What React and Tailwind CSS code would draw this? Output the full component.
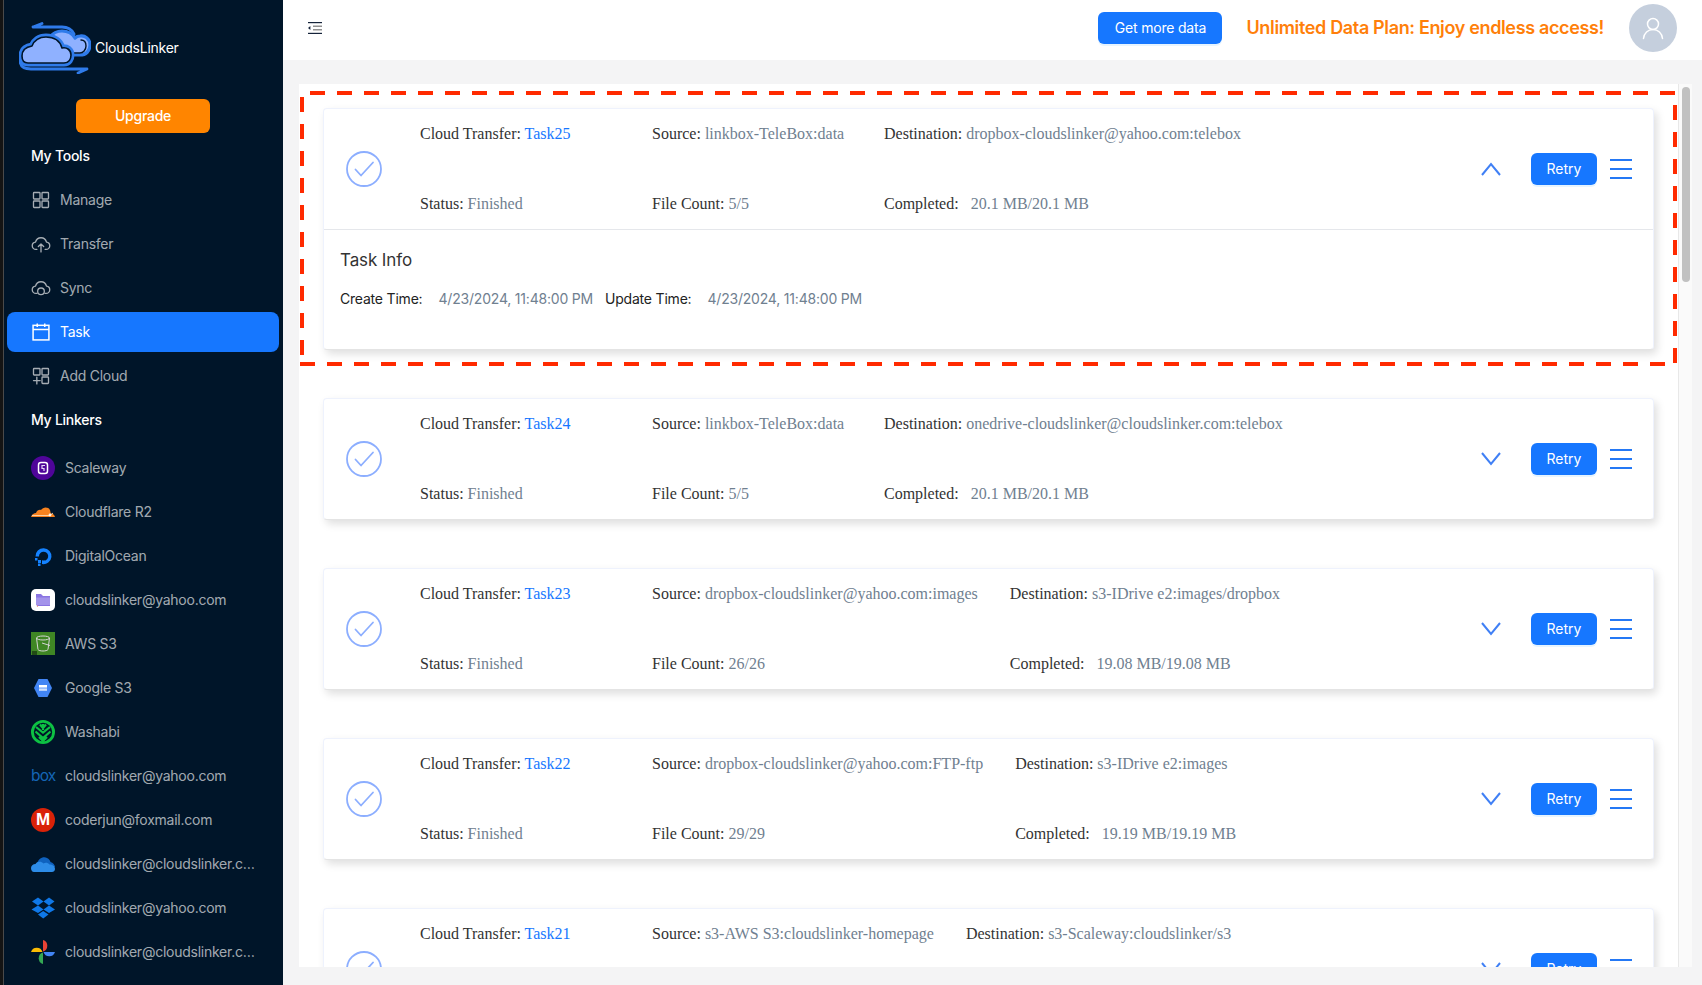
import React from "react";

const sans = "font-['Inter','Noto_Sans',sans-serif]";
const serif = "font-['Liberation_Serif','Times_New_Roman',serif]";

const S = (p) => <svg viewBox="0 0 24 24" fill="none" {...p} />;

const Logo = () => (
  <svg viewBox="19 22 72 52" className="w-[72px] h-[52px] shrink-0" fill="none" strokeLinecap="round" strokeLinejoin="round">
    <path d="M33 27 H62 C68 27 72 30 74 34 M33 27 L42 23.5 M20 60 C20 66 24 69 31 69 H87 L78 73" stroke="#2f7bea" strokeWidth="2.8" />
    <path d="M54 55 H80 C86 55 90 51 90 45 C90 39 85 35 80 36 C78 36 76 37 75 38 C72 33 67 31 62 31 C57 31 53 33 50 37 Z" fill="#8fb1ff" stroke="#2f7bea" strokeWidth="3.2" />
    <path d="M56 53 H80 C83 53 86 50 86 46 C86 42 84 40 81 40" stroke="#001529" strokeWidth="1.4" />
    <path d="M28 63 H64 C69 63 71 59 71 55 C71 50 67 47 62 48 C60 41 54 37 46 37 C39 37 34 41 32 46 C26 47 22 50 22 56 C22 60 24 63 28 63 Z" stroke="#2f7bea" strokeWidth="7" />
    <path d="M28 63 H64 C69 63 71 59 71 55 C71 50 67 47 62 48 C60 41 54 37 46 37 C39 37 34 41 32 46 C26 47 22 50 22 56 C22 60 24 63 28 63 Z" fill="#8fb1ff" stroke="#001529" strokeWidth="1.6" />
  </svg>
);

const iconBase = { className: "w-[20px] h-[20px] shrink-0", stroke: "currentColor", strokeWidth: 1.6, strokeLinecap: "round", strokeLinejoin: "round" };

const IconManage = () => (
  <S {...iconBase}>
    <rect x="3" y="3" width="7.8" height="7.8" rx="0.8" />
    <rect x="13.2" y="3" width="7.8" height="7.8" rx="0.8" />
    <rect x="3" y="13.2" width="7.8" height="7.8" rx="0.8" />
    <rect x="13.2" y="13.2" width="7.8" height="7.8" rx="0.8" />
  </S>
);
const IconTransfer = () => (
  <S {...iconBase}>
    <path d="M7 18.5 H6 C3.5 18.5 1.5 16.5 1.5 14 C1.5 11.7 3.2 10 5.4 9.7 C6.2 6.7 8.9 4.5 12 4.5 C15.1 4.5 17.8 6.7 18.6 9.7 C20.8 10 22.5 11.7 22.5 14 C22.5 16.5 20.5 18.5 18 18.5 H17" />
    <path d="M12 21.5 V12 M8.8 15 L12 12 L15.2 15" />
  </S>
);
const IconSync = () => (
  <S {...iconBase}>
    <path d="M7 18.5 H6 C3.5 18.5 1.5 16.5 1.5 14 C1.5 11.7 3.2 10 5.4 9.7 C6.2 6.7 8.9 4.5 12 4.5 C15.1 4.5 17.8 6.7 18.6 9.7 C20.8 10 22.5 11.7 22.5 14 C22.5 16.5 20.5 18.5 18 18.5 H17" />
    <circle cx="12" cy="16" r="4" />
  </S>
);
const IconTask = () => (
  <S {...iconBase} strokeWidth="1.8" strokeLinecap="butt" strokeLinejoin="miter">
    <rect x="2.5" y="4" width="19" height="17.5" />
    <path d="M2.5 9 H21.5 M7.5 1.8 V6 M16.5 1.8 V6" />
  </S>
);
const IconAdd = () => (
  <S {...iconBase}>
    <rect x="3" y="3" width="7.8" height="7.8" rx="0.8" />
    <rect x="13.2" y="3" width="7.8" height="7.8" rx="0.8" />
    <rect x="13.2" y="13.2" width="7.8" height="7.8" rx="0.8" />
    <path d="M7 13.5 V21.5 M3 17.5 H11" />
  </S>
);

const B = ({ children }) => <svg viewBox="0 0 24 24" className="w-[24px] h-[24px] shrink-0">{children}</svg>;

const brand = {
  scaleway: (
    <B>
      <circle cx="12" cy="12" r="12" fill="#4f0599" />
      <rect x="7.5" y="6.5" width="9" height="11" rx="2.5" fill="none" stroke="#fff" strokeWidth="1.5" />
      <path d="M14 9.5 H11 V12.5 H13 V15" fill="none" stroke="#e6d8f5" strokeWidth="1.2" />
    </B>
  ),
  cloudflare: (
    <B>
      <path d="M0 17 C1 14 3 13 5 13 C6 10 8.5 9.5 10 10 C12 7 17 6.5 19 10 C19.5 12 19.5 13 20 13.5 C22 13.5 23.5 15 24 17 Z" fill="#f6821f" />
      <path d="M1 15.5 H19 M19 15.5 L22 13" stroke="#ffe3c2" strokeWidth="0.8" fill="none" />
      <circle cx="19" cy="15" r="1.4" fill="#fff" opacity="0.85" />
    </B>
  ),
  ocean: (
    <B>
      <path d="M11 20 A8 8 0 1 0 4.5 12.5 H8 A4.6 4.6 0 1 1 11 16.6 Z" fill="#1482ff" />
      <rect x="11" y="16.5" width="3" height="3" fill="#1482ff" />
      <rect x="7" y="16" width="3" height="3" fill="#1482ff" />
      <rect x="4" y="14" width="2.5" height="2.5" fill="#1482ff" />
      <rect x="7" y="19.5" width="2.5" height="2.5" fill="#1482ff" />
    </B>
  ),
  folder: (
    <B>
      <rect width="24" height="22" y="1" rx="5" fill="#fff" />
      <path d="M5 6 H10 L12 8 H19 V18 H7 L5 17 Z" fill="#8a74e2" />
      <path d="M5 9.5 H19 V17 H5 Z" fill="#a393ea" />
      <circle cx="6.5" cy="18" r="0.6" fill="#e0553f" />
    </B>
  ),
  aws: (
    <B>
      <rect x="0" y="0" width="24" height="23" fill="#3f8624" />
      <ellipse cx="12" cy="6" rx="6.5" ry="2" fill="none" stroke="#d5d5d5" strokeWidth="1" />
      <path d="M5.5 6 L7 17.5 C8 19.5 16 19.5 17 17.5 L18.5 6" fill="none" stroke="#d5d5d5" strokeWidth="1" />
      <path d="M11 11 L19 13.5" stroke="#d5d5d5" strokeWidth="1" />
      <rect x="1" y="19" width="5" height="4" fill="#15320f" opacity="0.7" />
    </B>
  ),
  google: (
    <B>
      <path d="M7.5 3 H16.5 L21 12 L16.5 21 H7.5 L3 12 Z" fill="#4285f4" />
      <rect x="8" y="9" width="8" height="2.6" fill="#fff" />
      <rect x="8" y="12.4" width="8" height="2.4" fill="#cfe0fc" />
    </B>
  ),
  wasabi: (
    <B>
      <circle cx="12" cy="12" r="10.6" fill="#001529" stroke="#0dc143" strokeWidth="2.8" />
      <path d="M5 7 L12 12.5 L19 7 M4.5 11.5 L12 18 L19.5 11.5 M8 17 L12 21 L16 17 M12 4 V10 M9 4.5 L12 8 L15 4.5" fill="none" stroke="#0dc143" strokeWidth="2.2" />
    </B>
  ),
  box: <span className={`w-[24px] shrink-0 text-center text-[15.5px] leading-[24px] tracking-[-0.8px] text-[#1565b5] ${sans}`}>box</span>,
  mega: (
    <span className="w-[24px] h-[24px] shrink-0 rounded-full bg-[#d92208] flex items-center justify-center text-white text-[17px] font-black font-['Liberation_Sans',sans-serif]">
      M
    </span>
  ),
  onedrive: (
    <B>
      <path d="M6 12 C7 7 12 4 16 6 C18 7 19 8 19.5 10 C22 10.5 24 13 24 15 L10 14 Z" fill="#0f62bf" />
      <path d="M3 20 C1 20 0 18 0 16 C0 14 2 12 4.5 12 C6 9.5 10 9 12.5 11.5 C14 10.5 17 10.5 18.5 12.5 C21.5 12.5 24 14 24 17 C24 19 22.5 20 21 20 Z" fill="#2d8ce8" />
    </B>
  ),
  dropbox: (
    <B>
      <path d="M7 1.5 L12.5 5.5 L7 9.5 L1 5.5 Z M18 1.5 L23.5 5.5 L18 9.5 L12.5 5.5 Z M7 9.5 L12.5 13.5 L7 17 L0.5 13.5 Z M18 9.5 L24 13.5 L18 17 L12.5 13.5 Z" fill="#0f78e8" />
      <path d="M7 18.5 L12.2 15 L17.5 18.5 L12.2 22.5 Z" fill="#0f78e8" />
    </B>
  ),
  photos: (
    <B>
      <path d="M12 11.5 V0 A6 6 0 0 1 12 11.5 Z" fill="#ea4335" />
      <path d="M12.5 12 H24 A6 6 0 0 1 12.5 12 Z" fill="#4285f4" />
      <path d="M12 12.5 V24 A6 6 0 0 1 12 12.5 Z" fill="#34a853" />
      <path d="M11.5 12 H0 A6 6 0 0 1 11.5 12 Z" fill="#fbbc04" />
    </B>
  ),
};

const tools = [
  { label: "Manage", Icon: IconManage },
  { label: "Transfer", Icon: IconTransfer },
  { label: "Sync", Icon: IconSync },
  { label: "Task", Icon: IconTask, active: true },
  { label: "Add Cloud", Icon: IconAdd },
];

const linkers = [
  ["scaleway", "Scaleway"],
  ["cloudflare", "Cloudflare R2"],
  ["ocean", "DigitalOcean"],
  ["folder", "cloudslinker@yahoo.com"],
  ["aws", "AWS S3"],
  ["google", "Google S3"],
  ["wasabi", "Washabi"],
  ["box", "cloudslinker@yahoo.com"],
  ["mega", "coderjun@foxmail.com"],
  ["onedrive", "cloudslinker@cloudslinker.com"],
  ["dropbox", "cloudslinker@yahoo.com"],
  ["photos", "cloudslinker@cloudslinker.com"],
];

const tasks = [
  { name: "Task25", source: "linkbox-TeleBox:data", dest: "dropbox-cloudslinker@yahoo.com:telebox", count: "5/5", done: "20.1 MB/20.1 MB", open: true },
  { name: "Task24", source: "linkbox-TeleBox:data", dest: "onedrive-cloudslinker@cloudslinker.com:telebox", count: "5/5", done: "20.1 MB/20.1 MB" },
  { name: "Task23", source: "dropbox-cloudslinker@yahoo.com:images", dest: "s3-IDrive e2:images/dropbox", count: "26/26", done: "19.08 MB/19.08 MB" },
  { name: "Task22", source: "dropbox-cloudslinker@yahoo.com:FTP-ftp", dest: "s3-IDrive e2:images", count: "29/29", done: "19.19 MB/19.19 MB" },
  { name: "Task21", source: "s3-AWS S3:cloudslinker-homepage", dest: "s3-Scaleway:cloudslinker/s3", count: "18/18", done: "19.19 MB/19.19 MB" },
];

const Sidebar = () => (
  <aside className={`w-[279px] h-full shrink-0 bg-[#001529] text-[14px] tracking-[-0.25px] ${sans}`}>
    <div className="h-[96px] flex items-center pl-[15px]">
      <Logo />
      <span className="ml-[4px] text-white leading-[22px]">CloudsLinker</span>
    </div>
    <button className="block mt-[3px] ml-[72px] w-[134px] h-[34px] pb-[1px] rounded-[6px] bg-[#ff8500] text-white font-medium">
      Upgrade
    </button>
    <div className="mt-[3px] h-[40px] pb-[1px] flex items-center pl-[27px] text-white font-medium">My Tools</div>
    <nav className="mt-[4px] flex flex-col gap-[4px] pl-[3px] pr-[4px]">
      {tools.map(({ label, Icon, active }) => (
        <a
          key={label}
          className={`h-[40px] pb-[1px] rounded-[8px] flex items-center pl-[24px] gap-[9px] ${active ? "bg-[#1677ff] text-white" : "text-[#ffffffa6]"}`}
        >
          <Icon />
          <span>{label}</span>
        </a>
      ))}
    </nav>
    <div className="mt-[4px] h-[40px] pb-[1px] flex items-center pl-[27px] text-white font-medium">My Linkers</div>
    <nav className="mt-[8px] flex flex-col gap-[4px] pl-[3px] pr-[4px]">
      {linkers.map(([k, label], i) => (
        <a key={i} className="h-[40px] flex items-center pl-[24px] gap-[10px] text-[#ffffffa6]">
          {brand[k]}
          <span className="truncate w-[197px] pb-[1px]">{label}</span>
        </a>
      ))}
    </nav>
  </aside>
);

const Header = () => (
  <header className={`h-[60px] shrink-0 bg-white flex items-center pb-[4px] pl-[25px] pr-[25px] ${sans}`}>
    <svg viewBox="0 0 14 12" className="w-[14px] h-[12px] -mt-[1px]">
      <rect x="0" y="0" width="14" height="1.2" fill="#15233a" />
      <rect x="5" y="3.6" width="9" height="1.2" fill="#777" />
      <rect x="5" y="7.2" width="9" height="1.2" fill="#777" />
      <rect x="0" y="10.8" width="14" height="1.2" fill="#15233a" />
      <path d="M0 6 L2.4 4 V8 Z" fill="#15233a" />
    </svg>
    <button className="ml-auto w-[124px] h-[32px] pb-[1px] rounded-[6px] bg-[#1677ff] text-white text-[14px] tracking-[-0.2px] shadow-[0_2px_0_rgba(5,145,255,0.1)]">
      Get more data
    </button>
    <span className="ml-[24px] pb-[1px] text-[18px] font-semibold tracking-[-0.35px] text-[#ff7f0a] whitespace-nowrap">Unlimited Data Plan: Enjoy endless access!</span>
    <div className="ml-[25px] w-[48px] h-[48px] rounded-full bg-[#c5cfdd] flex items-center justify-center">
      <svg viewBox="0 0 24 24" className="w-[24px] h-[24px]" fill="none" stroke="#fff" strokeWidth="1.5" strokeLinecap="round">
        <circle cx="12" cy="8" r="5.5" />
        <path d="M2.5 22.5 C3 17 7 13.5 12 13.5 C17 13.5 21 17 21.5 22.5" />
      </svg>
    </div>
  </header>
);

const Field = ({ label, value, gap }) => (
  <div className="h-[24px] leading-[24px] whitespace-nowrap">
    <span className="text-[#333]">{label}: </span>
    <span className={`text-[#708090] ${gap ? "ml-[8px]" : ""}`}>{value}</span>
  </div>
);

const Card = ({ t }) => (
  <section className="w-[1331px] shrink-0 bg-white rounded-[4px] border border-[#eef2fd] border-b-[#e4e4e4] shadow-[3px_4px_8px_rgba(0,0,0,0.13)]">
    <div className="h-[120px] flex items-center pl-[22px] pr-[21px]">
      <svg viewBox="0 0 36 36" className="w-[36px] h-[36px] shrink-0" fill="none" stroke="#8caeff" strokeWidth="1.8">
        <circle cx="18" cy="18" r="17" />
        <path d="M9.5 18.5 L15 24.5 L27 11.5" strokeLinecap="round" strokeLinejoin="round" />
      </svg>
      <div className={`ml-[38px] flex text-[16px] ${serif}`}>
        <div className="min-w-[200px] mr-[32px] h-[94px] flex flex-col justify-between">
          <div className="h-[24px] leading-[24px] whitespace-nowrap text-[#333]">
            Cloud Transfer: <span className="text-[#1677ff]">{t.name}</span>
          </div>
          <Field label="Status" value="Finished" />
        </div>
        <div className="min-w-[200px] mr-[32px] h-[94px] flex flex-col justify-between">
          <Field label="Source" value={t.source} />
          <Field label="File Count" value={t.count} />
        </div>
        <div className="min-w-[200px] h-[94px] flex flex-col justify-between">
          <Field label="Destination" value={t.dest} />
          <Field label="Completed" value={t.done} gap />
        </div>
      </div>
      <svg viewBox="0 0 20 14" className="ml-auto w-[20px] h-[14px] shrink-0" fill="none" stroke="#4080f5" strokeWidth="2">
        <path d={t.open ? "M1 13 L10 2 L19 13" : "M1 1 L10 12 L19 1"} />
      </svg>
      <button className={`ml-[30px] w-[66px] h-[32px] pb-[1px] shrink-0 rounded-[6px] bg-[#1677ff] text-white text-[14px] shadow-[0_2px_0_rgba(5,145,255,0.1)] ${sans}`}>
        Retry
      </button>
      <svg viewBox="0 0 22 20" className="ml-[13px] w-[22px] h-[20px] shrink-0" fill="none" stroke="#2478f5" strokeWidth="2">
        <path d="M0 1 H22 M0 10 H22 M0 19 H22" />
      </svg>
    </div>
    {t.open && (
      <div className={`border-t border-[#e5e7eb] h-[120px] pl-[16px] ${sans}`}>
        <h3 className="mt-[17px] text-[17px] tracking-[-0.1px] leading-[26px] font-normal text-[#333]">Task Info</h3>
        <div className="mt-[15px] flex text-[14px] tracking-[-0.2px] leading-[22px] whitespace-nowrap">
          <span className="text-[#222]">Create Time:</span>
          <span className="ml-[16px] text-[#708090]">4/23/2024, 11:48:00 PM</span>
          <span className="ml-[12px] text-[#222]">Update Time:</span>
          <span className="ml-[16px] text-[#708090]">4/23/2024, 11:48:00 PM</span>
        </div>
      </div>
    )}
  </section>
);

const Dashes = () => (
  <svg className="absolute inset-0 w-full h-full pointer-events-none" viewBox="0 0 1702 985" fill="none" stroke="#ff2a00" strokeWidth="4" strokeDasharray="15 12">
    <path d="M310 93 H1675" />
    <path d="M300 364 H1675" />
    <path d="M302 97 V356" />
    <path d="M1675 105 V364" />
  </svg>
);

export default function App() {
  return (
    <div className="relative w-[1702px] h-[985px] overflow-hidden flex bg-[#f4f4f5]">
      <div className="w-[4px] h-full shrink-0 bg-[#141414] border-r border-[#4a4a4a]" />
      <Sidebar />
      <main className="flex-1 min-w-0 h-full flex flex-col">
        <Header />
        <div className="flex-1 min-h-0 mt-[24px] mb-[18px] ml-[16px] mr-[10px] flex">
          <div className="flex-1 min-w-0 bg-white overflow-hidden pt-[24px] pl-[24px] flex flex-col gap-[48px]">
            {tasks.map((t) => (
              <Card key={t.name} t={t} />
            ))}
          </div>
          <div className="w-[14px] shrink-0 bg-[#fafafa] border-l border-[#e8e8e8] pt-[3px] pl-[3px]">
            <div className="w-[8px] h-[195px] rounded-full bg-[#c1c1c1]" />
          </div>
        </div>
      </main>
      <Dashes />
    </div>
  );
}
